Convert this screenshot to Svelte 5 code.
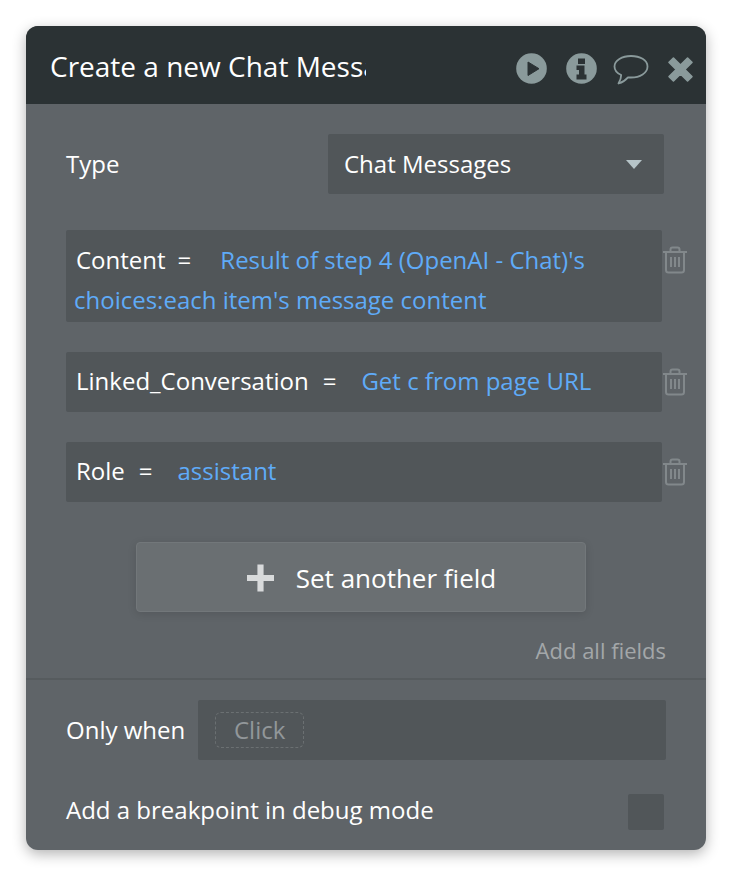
<script>
  const fields = [
    { name: 'Content', value: "Result of step 4 (OpenAI - Chat)'s choices:each item's message content", tall: true },
    { name: 'Linked_Conversation', value: 'Get c from page URL', tall: false },
    { name: 'Role', value: 'assistant', tall: false }
  ];
</script>

<div class="page">
  <section class="card">
    <header class="head">
      <div class="title">Create a new Chat Messages</div>
      <div class="tools">
        <svg class="tool" viewBox="0 0 31 31" width="31" height="31" aria-hidden="true">
          <circle cx="15.500" cy="15.500" r="15.300" fill="#8a9a9b" />
          <path d="M12 9 L23 15.700 L12 22.500 Z" fill="#2b3234" stroke="#2b3234" stroke-width="1" stroke-linejoin="round" />
        </svg>
        <svg class="tool" viewBox="0 0 31 31" width="31" height="31" aria-hidden="true">
          <circle cx="15.500" cy="15.500" r="15.300" fill="#8a9a9b" />
          <path d="M12 5.500h7v5.500h-7z M10.500 12.500h8v9h2v5h-10v-5h2.500v-4.500h-2.500z" fill="#2b3234" />
        </svg>
        <svg class="tool bubble" viewBox="0 0 36 32" width="36" height="32" aria-hidden="true">
          <path d="M18 2C9 2 1.500 6.500 1.500 12.500c0 3.500 2.600 6.700 6.700 8.500 0 2.800-1 5.500-2.700 8.500 3.500-1 7-3.200 9.500-6.200 1 .2 2 .2 3 .2 9 0 16.500-4.500 16.500-11S27 2 18 2z" fill="none" stroke="#8a9a9b" stroke-width="1.800" stroke-linejoin="round" />
        </svg>
        <svg class="tool close" viewBox="1 1 23 23" width="25" height="25" aria-hidden="true">
          <path d="M6 2 L12.500 8.500 L19 2 L23 6 L16.500 12.500 L23 19 L19 23 L12.500 16.500 L6 23 L2 19 L8.500 12.500 L2 6 Z" fill="#8a9a9b" stroke="#8a9a9b" stroke-width="1.500" stroke-linejoin="round" />
        </svg>
      </div>
    </header>

    <div class="body">
      <div class="type-row">
        <span class="label">Type</span>
        <div class="select">
          <span class="label">Chat Messages</span>
          <span class="caret"></span>
        </div>
      </div>

      <div class="fields">
        {#each fields as f}
          <div class="field-row">
            <div class="field" class:tall={f.tall}>
              <span class="name">{f.name}</span><span class="eq">=</span><span class="value">{f.value}</span>
            </div>
            <svg class="trash" viewBox="0 0 26 28" width="26" height="28" aria-hidden="true">
              <path d="M1 6h24 M4 6v18a2.500 2.500 0 0 0 2.500 2.500h13A2.500 2.500 0 0 0 22 24V6 M8.500 6V3.500A2 2 0 0 1 10.500 1.500h5a2 2 0 0 1 2 2V6 M9 11v10 M13 11v10 M17 11v10" fill="none" stroke="#82888b" stroke-width="2" />
            </svg>
          </div>
        {/each}
      </div>

      <button class="add" type="button">
        <svg viewBox="0 0 28 28" width="27" height="28" aria-hidden="true">
          <path d="M10.800 0h6.400v10.800H28v6.400H17.200V28h-6.400V17.200H0v-6.400h10.800z" fill="#d8dadb" />
        </svg>
        <span>Set another field</span>
      </button>

      <div class="add-all">Add all fields</div>
    </div>

    <div class="foot">
      <div class="when-row">
        <span class="label">Only when</span>
        <div class="when-input"><span class="click">Click</span></div>
      </div>
      <div class="debug-row">
        <span class="label debug">Add a breakpoint in debug mode</span>
        <span class="check"></span>
      </div>
    </div>
  </section>
</div>

<style>
  :global(body) {
    margin: 0;
    background: #fff;
  }

  .page {
    width: 732px;
    height: 878px;
    padding: 26px;
    box-sizing: border-box;
    font-family: "Open Sans", sans-serif;
    font-size: 24px;
    color: #fff;
  }

  .card {
    width: 680px;
    height: 824px;
    display: flex;
    flex-direction: column;
    background: #5f6468;
    border-radius: 12px;
    box-shadow: 0 4px 14px rgba(0, 0, 0, 0.3);
    overflow: hidden;
  }

  .head {
    height: 78px;
    flex: none;
    display: flex;
    align-items: center;
    background: #2b3234;
    padding-left: 24px;
  }

  .title {
    width: 316px;
    margin-top: 2px;
    font-size: 28px;
    white-space: nowrap;
    overflow: hidden;
  }

  .tools {
    display: flex;
    align-items: center;
    margin-top: 6px;
    margin-left: 150px;
  }

  .tool {
    flex: none;
    display: block;
    margin-right: 19px;
  }

  .bubble {
    margin: 0 19px 0 -3px;
    transform: translateY(2px);
  }

  .close {
    margin-right: 0;
    transform: translateY(1px);
  }

  .label {
    margin-bottom: 2px;
  }

  .label.debug {
    margin-bottom: 5px;
  }

  .body {
    padding: 30px 40px 0;
    height: 544px;
    flex: none;
    border-bottom: 2px solid #565b5e;
  }

  .type-row {
    display: flex;
    align-items: center;
    justify-content: space-between;
    width: 598px;
  }

  .select {
    width: 336px;
    height: 60px;
    box-sizing: border-box;
    padding: 0 22px 0 16px;
    display: flex;
    align-items: center;
    justify-content: space-between;
    background: #515659;
    border-radius: 2px;
  }

  .caret {
    width: 0;
    height: 0;
    border-left: 8px solid transparent;
    border-right: 8px solid transparent;
    border-top: 9px solid #b6c4c8;
  }

  .fields {
    margin-top: 36px;
    display: flex;
    flex-direction: column;
    gap: 30px;
  }

  .field-row {
    display: flex;
    align-items: flex-start;
  }

  .field {
    flex: none;
    width: 596px;
    min-height: 60px;
    box-sizing: border-box;
    padding: 9px 8px 2px;
    line-height: 40px;
    background: #515659;
    border-radius: 2px;
  }

  .field.tall {
    padding-top: 10px;
  }

  .name {
    margin-left: 2px;
  }

  .eq {
    margin: 0 25px 0 14px;
  }

  .tall .eq {
    margin: 0 29px 0 12px;
  }

  .value {
    color: #5fabf8;
  }

  .trash {
    flex: none;
    margin: 16px 0 0;
  }

  .add {
    display: flex;
    align-items: center;
    justify-content: center;
    gap: 22px;
    width: 450px;
    height: 70px;
    margin: 40px 0 0 70px;
    padding: 2px 0 0 21px;
    background: #6a6f72;
    border: 1px solid #72777a;
    border-radius: 4px;
    box-shadow: 0 2px 8px rgba(0, 0, 0, 0.12);
    color: #fff;
    font: inherit;
    font-size: 26px;
  }

  .add-all {
    margin-top: 23px;
    width: 600px;
    text-align: right;
    line-height: 30px;
    font-size: 22px;
    color: #a3a7a9;
  }

  .foot {
    flex: 1;
    padding: 20px 40px 0;
  }

  .when-row {
    display: flex;
    align-items: center;
    width: 600px;
    justify-content: space-between;
  }

  .when-input {
    width: 468px;
    height: 60px;
    box-sizing: border-box;
    display: flex;
    align-items: center;
    padding-left: 17px;
    background: #515659;
    border-radius: 2px;
  }

  .click {
    padding: 0 18px;
    height: 36px;
    line-height: 34px;
    box-sizing: border-box;
    border: 1px dashed #6b7072;
    border-radius: 6px;
    color: #92979a;
  }

  .debug-row {
    margin-top: 34px;
    width: 598px;
    height: 36px;
    display: flex;
    align-items: center;
    justify-content: space-between;
  }

  .check {
    width: 36px;
    height: 36px;
    background: #515659;
    border-radius: 2px;
  }
</style>
